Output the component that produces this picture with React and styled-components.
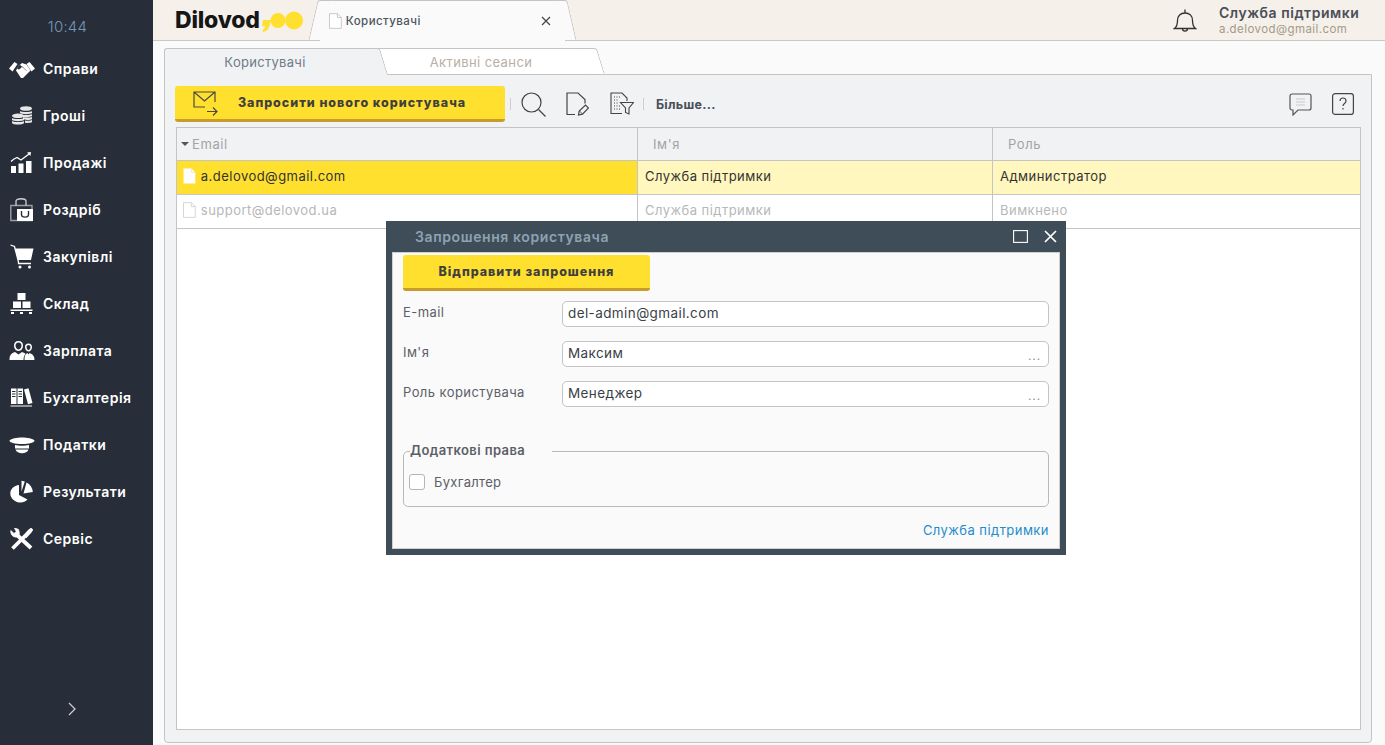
import React from 'react';
import styled, { createGlobalStyle } from 'styled-components';

const Global = createGlobalStyle`
  html, body { margin: 0; padding: 0; height: 100%; overflow: hidden; }
  body { font-family: Inter, "Noto Sans", "Liberation Sans", sans-serif; }
  #root { height: 100%; }
  * { box-sizing: border-box; }
`;

const Page = styled.div`display: flex; width: 1385px; height: 745px; position: relative; background: #fafafa;`;
const Sidebar = styled.nav`width: 153px; flex: none; background: #272e39; display: flex; flex-direction: column; color: #fff;`;
const Clock = styled.div`height: 45px; padding: 16px 18px 0 0; text-align: center; font-size: 15px; line-height: 22px; font-weight: 300; letter-spacing: .2px; color: #7596b5;`;
const MenuItem = styled.a`height: 47px; display: flex; align-items: center; padding-left: 8px; font-size: 14px; font-weight: 600; letter-spacing: .5px; color: #fff;`;
const MenuIcon = styled.span`width: 27px; height: 24px; margin-right: 8px; display: flex; align-items: center; justify-content: center; color: #fff; font-size: 26px;`;
const Expand = styled.div`margin-top: auto; padding: 0 0 28px 68px; height: 44px; display: flex; align-items: center;`;

const Main = styled.div`flex: 1; min-width: 0; display: flex; flex-direction: column;`;
const TopBar = styled.header`height: 41px; flex: none; background: #f5f0ea; border-bottom: 1px solid #c9c9c9; display: flex; align-items: flex-end; padding-left: 22px;`;
const Logo = styled.div`width: 137px; height: 40px; flex: none; display: flex; align-items: center; font-size: 23px; font-weight: 800; letter-spacing: -.2px; color: #161616; position: relative;`;
const LogoMark = styled.svg`margin: 0 0 0 1px; flex: none;`;
const DocTab = styled.div`
  position: relative; width: 245px; height: 41px; margin-bottom: -1px; margin-left: 8px; flex: none; background: #fafafa;
  border-top: 1px solid #c4c4c4; display: flex; align-items: center; padding: 0 14px 0 9px; font-size: 11.5px; font-weight: 500; letter-spacing: .45px; color: #4d5560; border-radius: 3px 3px 0 0;
  &::before, &::after { content: ''; position: absolute; top: -1px; bottom: 1px; width: 14px; background: #fafafa; border-top: 1px solid #c4c4c4; }
  &::before { left: -7px; transform: skewX(-13deg); border-left: 1px solid #c4c4c4; border-radius: 3px 0 0 0; }
  &::after { right: -7px; transform: skewX(13deg); border-right: 1px solid #c4c4c4; border-radius: 0 3px 0 0; }
`;
const DocTabIcon = styled.span`position: relative; z-index: 1; display: flex;`;
const DocTabLabel = styled.span`position: relative; z-index: 1; margin-left: 4px; flex: 1;`;
const DocTabClose = styled.span`position: relative; z-index: 1; display: flex;`;
const UserArea = styled.div`margin-left: auto; height: 40px; display: flex; align-items: center; padding-right: 26px;`;
const Bell = styled.svg`margin-right: 22px; flex: none;`;
const UserText = styled.div`display: flex; flex-direction: column; width: 140px;`;
const UserName = styled.div`font-size: 14px; line-height: 18px; font-weight: 600; color: #4a4f58; white-space: nowrap; letter-spacing: .53px;`;
const UserMail = styled.div`font-size: 11.5px; line-height: 15px; color: #a39a88; white-space: nowrap; letter-spacing: .42px;`;

const Content = styled.div`flex: 1; min-height: 0; display: flex; flex-direction: column; padding: 7px 13px 2px 11px;`;
const Tabs = styled.div`height: 27px; flex: none; display: flex; margin-bottom: -1px; position: relative; z-index: 1;`;
const PanelTab = styled.div`
  position: relative; height: 27px; width: ${p => p.$w}px; flex: none; margin-left: ${p => p.$first ? 0 : -4}px;
  padding-right: ${p => p.$first ? 12 : 5}px;
  display: flex; align-items: center; justify-content: center; font-size: 13px; letter-spacing: ${p => p.$first ? .3 : .4}px;
  color: ${p => p.$active ? '#6f7a8a' : '#bcaea2'};
  background: ${p => p.$active ? '#f1f2f4' : '#fff'};
  border: 1px solid #c4c4c4; border-right: 0; ${p => p.$active ? 'border-bottom: 0;' : 'border-left: 0;'}
  border-radius: ${p => p.$active ? '3px 0 0 0' : '0'};
  z-index: ${p => p.$active ? 2 : 1};
  &::after { content: ''; position: absolute; top: -1px; bottom: ${p => p.$active ? 0 : -1}px; right: -7px; width: 14px;
    background: inherit; border: 1px solid #c4c4c4; border-left: 0; ${p => p.$active ? 'border-bottom: 0;' : ''} transform: skewX(17deg); border-radius: 0 3px 0 0; z-index: -1; }
`;
const Panel = styled.section`flex: 1; min-height: 0; background: #f1f2f4; border: 1px solid #c4c4c4; border-radius: 0 0 4px 4px; display: flex; flex-direction: column; padding: 11px 10px 12px 11px;`;
const Toolbar = styled.div`height: 36px; flex: none; display: flex; align-items: center; margin-bottom: 5px; margin-left: -1px;`;
const YellowButton = styled.button`
  border: 0; border-bottom: 3px solid #c99b2c; border-radius: 3px; background: #ffe02e; color: #3f3f3f; height: 36px; width: ${p => p.$w}px; flex: none;
  font: 800 12.5px Inter, "Noto Sans", sans-serif; letter-spacing: .98px; padding: 0 0 0 ${p => p.$pl || 0}px; display: flex; align-items: center; justify-content: center; position: relative;
`;
const ButtonIcon = styled.svg`position: absolute; left: 18px; top: 4px;`;
const Divider = styled.span`width: 1px; height: 12px; background: #cfcfcf; flex: none; margin: ${p => p.$m};`;
const ToolIcon = styled.svg`flex: none; margin-right: ${p => p.$mr || 0}px;`;
const More = styled.span`font-size: 12.5px; font-weight: 700; color: #4a4f58; letter-spacing: .28px;`;
const ToolSpacer = styled.span`flex: 1;`;

const Table = styled.div`flex: 1; min-height: 0; background: #fff; border: 1px solid #c4c4c4;`;
const Row = styled.div`display: grid; grid-template-columns: 461px 355px 1fr; height: ${p => p.$h}px; border-bottom: 1px solid #c4c4c4;`;
const HeadCell = styled.div`display: flex; align-items: center; background: #f1f2f4; color: #a2a2a8; font-size: 13px; letter-spacing: .6px; padding-left: ${p => p.$pl}px; border-right: ${p => p.$last ? 0 : '1px solid #c4c4c4'}; gap: 3px;`;
const Cell = styled.div`
  display: flex; align-items: center; font-size: 13px; letter-spacing: .47px; padding: 0 0 3px ${p => p.$pl}px; gap: 5px;
  background: ${p => p.$bg || '#fff'}; color: ${p => p.$muted ? '#b7b7b7' : '#333'};
  border-right: ${p => p.$last ? 0 : '1px solid #c4c4c4'};
`;
const SortArrow = styled.span`width: 0; height: 0; border: 4px solid transparent; border-top: 4px solid #555; border-bottom: 0;`;

const Modal = styled.div`position: absolute; left: 386px; top: 221px; width: 680px; height: 334px; background: #3f4d59; padding: 0 6px 6px; display: flex; flex-direction: column; z-index: 5;`;
const ModalBar = styled.div`height: 31px; flex: none; display: flex; align-items: center; padding: 0 0 1px 23px; color: #8ea2b0; font-size: 14px; font-weight: 600; letter-spacing: .6px;`;
const ModalTitle = styled.span`flex: 1;`;
const MaxIcon = styled.svg`margin-right: 16px; margin-top: 1px;`;
const CloseIcon = styled.svg`margin-right: 3px; margin-top: 1px;`;
const ModalBody = styled.div`flex: 1; background: #fafafa; border: 1px solid #cfcfcf; padding: 2px 10px 0; display: flex; flex-direction: column;`;
const FormRow = styled.div`display: flex; height: 26px; margin-bottom: 14px; &:first-of-type { margin-top: 10px; }`;
const FormLabel = styled.label`width: 159px; flex: none; font-size: 13px; line-height: 22px; color: #5b6068; letter-spacing: .42px;`;
const Field = styled.div`flex: 1; height: 26px; background: #fff; border: 1px solid #c4c4c4; border-radius: 5px; display: flex; align-items: center; padding: 0 5px 2px; font-size: 13.5px; letter-spacing: .4px; color: #3a3f47; position: relative;`;
const Dots = styled.span`position: absolute; right: 7px; bottom: 3px; font-size: 12px; line-height: 14px; color: #8f8f8f; letter-spacing: .9px;`;
const Group = styled.fieldset`margin: 21px 0 0; padding: 14px 6px 0; height: 65px; border: 1px solid #b9b9b9; border-radius: 5px; min-width: 0;`;
const GroupLegend = styled.legend`padding: 0 27px 2px 0; margin: -1px 0 0; font-size: 13px; font-weight: 600; color: #5a5f67; line-height: 16px; letter-spacing: .4px;`;
const CheckRow = styled.div`display: flex; align-items: center; gap: 9px; font-size: 13px; color: #5b6068; letter-spacing: .3px; margin-left: -1px;`;
const Check = styled.span`width: 16px; height: 16px; background: #fff; border: 1px solid #b5b5b5; border-radius: 3px; flex: none;`;
const SupportLink = styled.a`margin-top: 14px; text-align: right; font-size: 13px; line-height: 18px; color: #1f8ccc; letter-spacing: .45px;`;

const Page1 = ({ color = '#fff', stroke = 'none', size = 16 }) => (
  <svg width={size * .8} height={size} viewBox="0 0 13 16"><path d="M.5.5h8l4 4v11H.5z" fill={color} stroke={stroke} /><path d="M8.500.5v4h4" fill="none" stroke={stroke === 'none' ? '#e8e8e8' : stroke} /></svg>
);

const icons = {
  hands: <svg width="26" height="18" viewBox="0 0 26 18" fill="#fff"><path d="M0 8.500L5.500 2l3 2L3.500 11.500z" /><path d="M26 8.500L20.500 2l-3 2 5 7.500z" /><path d="M7 10.500l3-5.500 3-2 4.500 1.500 4 6-7.500 7.500h-2z" /><path d="M9.500 3.500L13 2l-3 3.500-1.500 3c1 1 2.500.5 3.500-1l1-1 4.500 4.500" fill="#272e39" stroke="#272e39" strokeWidth=".6" /><path d="M13.500 7.500l5 5-1.500 2-5-4.500z" /></svg>,
  coins: <svg width="22" height="20" viewBox="0 0 22 20" fill="#e6e6e6"><ellipse cx="15" cy="2.500" rx="6" ry="2.300" /><path d="M9 5c1 1.300 11 1.300 12 0v2c-1 1.500-11 1.500-12 0zM9 8c1 1.300 11 1.300 12 0v2c-1 1.500-11 1.500-12 0zM12 11c2 .8 8 .6 9 0v2c-1 1.200-7 1.200-9 .6zM14 14.500c2 .4 6 .4 7-.4v2c-1 1-5 1-7 .6z" /><ellipse cx="7" cy="9.800" rx="6" ry="2.300" /><path d="M1 12c1 1.300 11 1.300 12 0v2c-1 1.500-11 1.500-12 0zM1 15c1 1.300 11 1.300 12 0v2c-1 2-11 2-12 0z" /></svg>,
  chart: <svg width="23" height="23" viewBox="0 0 23 23" fill="#fff"><path d="M1 15h5v7H1zM8.500 12.500h5V22h-5zM16 10h5.500v12H16z" /><path d="M1 10.500C3.500 8 5.500 7 7 6.500l4 2.500 8-6" fill="none" stroke="#fff" strokeWidth="1.300" /><path d="M17 1.500l4-.5-.6 4z" /></svg>,
  bag: <svg width="24" height="24" viewBox="0 0 24 24"><path d="M.8 7.500H22V22.500H.8z" fill="none" stroke="#9a9ea5" strokeWidth="1.400" /><path d="M6 7.500V3c0-3 10-3 10 0v4.500" fill="none" stroke="#cfd1d4" strokeWidth="1.300" /><path d="M7 11h16v12H7z" fill="#fff" /><path d="M11.500 13v3.500c0 3.500 7 3.500 7 0V13" fill="none" stroke="#272e39" strokeWidth="1.400" /></svg>,
  cart: <svg width="24" height="25" viewBox="0 0 24 25"><path d="M5 4.500h18.500L21 16H8z" fill="#fff" /><path d="M.5 1l4 1.500L8.500 18v1.500H21" fill="none" stroke="#fff" strokeWidth="1.300" /><circle cx="10" cy="23" r="1.500" fill="#fff" /><circle cx="19.500" cy="23" r="1.500" fill="#fff" /></svg>,
  stock: <svg width="23" height="23" viewBox="0 0 23 23" fill="#fff"><path d="M7.500 1h8v7h-8zM3 9.500h8V16H3zM12.500 9.500h8V16h-8zM.500 17.500h22v1.500H.500zM1 20h3v2H1zM10 20h3v2h-3zM19 20h3v2h-3z" /></svg>,
  team: <svg width="26" height="21" viewBox="0 0 26 21" fill="#fff"><path d="M9.500 1c3 0 4.500 2 4.500 4.500S12.500 11 9.500 11 5 8 5 5.500 6.500 1 9.500 1zm0 1.500C7.500 2.500 6.500 4 6.500 5.500S7.500 9.500 9.500 9.500s3-2.500 3-4-1-3-3-3z" /><path d="M.5 20c0-5 2-7 5.500-8l3.500 2.500 3.500-2.500c1.500.5 2.500 1 3.500 2-1.500 1.500-2 3.500-2 6z" /><path d="M19.500 3.500c2.300 0 3.500 1.700 3.500 3.500s-1.200 4.500-3.500 4.500S16 9 16 7s1.200-3.500 3.500-3.500zm0 1.500c-1.200 0-2 1-2 2s.8 3 2 3 2-2 2-3-.8-2-2-2z" /><path d="M15.500 20c0-4 .5-6 3-7l1 1.500 1-1.500c3 1 5 3 5 7z" /></svg>,
  books: <svg width="23" height="20" viewBox="0 0 23 20" fill="#fff"><path fillRule="evenodd" d="M1 .5h5.500v15.500H1zM2 3v1h3.500V3zm0 2.500v1h3.500v-1zm0 2.500v1h3.500V8zM7.500.5H13V16H7.500zM8.500 3v1H12V3zm0 2.500v1H12v-1zm0 2.500v1H12V8z" /><path d="M14 1.500l4.500-1.200L22.500 15l-4.500 1.200z" /><path d="M.5 17.500h21.500v1H.5z" /></svg>,
  hat: <svg width="26" height="20" viewBox="0 0 26 20" fill="#fff"><path d="M.5 5.500C4 1.500 22 1.500 25.500 5.500c0 2-5 3.500-12.500 3.500S.5 7.500.5 5.500z" /><path d="M6 10c4 1 10 1 14 0v3.500H6z" /><path d="M6.500 14.500h13c-1.500 5-11.500 5-13 0z" /></svg>,
  pie: <svg width="25" height="23" viewBox="0 0 24 23" fill="#fff"><path d="M9.500 5v10l8.500 4.500C16 21.800 13 22.800 10 22.500 5 22 .8 18 .8 13.500.8 9 4.500 5.500 9.500 5z" /><path d="M12 .8l3.300.8-3.300 10z" /><path d="M17 2.500c3.500 1.800 6 5 6.300 9.500l-9.300 1.500z" /></svg>,
  tools: <svg width="23" height="22" viewBox="0 0 23 22" fill="none" stroke="#fff"><path d="M6 6l15 14" strokeWidth="3.800" /><path d="M.8 2.500c-.3 4 2 7 6.200 6.500 2.500-1 3-4.500 1.200-7.800L4.500.2l1.800 3.300L4 5.500z" fill="#fff" strokeWidth=".8" /><path d="M2.500 20.500L15 8" strokeWidth="3.800" /><path d="M14 8l5-5.500 2-1.500 1 1-1.500 2L15.500 9.500" strokeWidth="2" /></svg>,
};

const menu = [
  ['Справи', 'hands'], ['Гроші', 'coins'], ['Продажі', 'chart'], ['Роздріб', 'bag'], ['Закупівлі', 'cart'], ['Склад', 'stock'],
  ['Зарплата', 'team'], ['Бухгалтерія', 'books'], ['Податки', 'hat'], ['Результати', 'pie'], ['Сервіс', 'tools'],
];

export default function App() {
  return (
    <Page>
      <Global />
      <Sidebar>
        <Clock>10:44</Clock>
        {menu.map(([t, i]) => <MenuItem key={t}><MenuIcon>{icons[i]}</MenuIcon>{t}</MenuItem>)}
        <Expand><svg width="8" height="14" viewBox="0 0 8 14"><path d="M1 1l6 6-6 6" fill="none" stroke="#c9ccd0" strokeWidth="1.300" /></svg></Expand>
      </Sidebar>
      <Main>
        <TopBar>
          <Logo>Dilovod
            <LogoMark width="44" height="24" viewBox="0 0 44 24"><path d="M2 12h8l-1.500 6c-.8 3-2.500 5-6 6l-1.300-1.500c1.700-1 2.700-2.500 2.900-4.500H1z" fill="#ffe02e" /><circle cx="17" cy="12.500" r="7.500" fill="#ffe02e" /><circle cx="33" cy="12.500" r="9" fill="#ffe02e" /></LogoMark>
          </Logo>
          <DocTab>
            <DocTabIcon><Page1 color="#fff" stroke="#c9c9c9" /></DocTabIcon>
            <DocTabLabel>Користувачі</DocTabLabel>
            <DocTabClose><svg width="10" height="10" viewBox="0 0 10 10"><path d="M1 1l8 8M9 1l-8 8" stroke="#444" strokeWidth="1.200" /></svg></DocTabClose>
          </DocTab>
          <UserArea>
            <Bell width="24" height="26" viewBox="0 0 24 26" fill="none" stroke="#333" strokeWidth="1.300"><path d="M1.500 21.500c2.500-2 3-4 3-8 0-4.500 3-7.500 7.500-7.500s7.500 3 7.500 7.500c0 4 .5 6 3 8z" /><path d="M12 6V2.500M9.500 21.500c0 3.500 5 3.500 5 0" /></Bell>
            <UserText>
              <UserName>Служба підтримки</UserName>
              <UserMail>a.delovod@gmail.com</UserMail>
            </UserText>
          </UserArea>
        </TopBar>
        <Content>
          <Tabs>
            <PanelTab $first $active $w={213}>Користувачі</PanelTab>
            <PanelTab $w={221}>Активні сеанси</PanelTab>
          </Tabs>
          <Panel>
            <Toolbar>
              <YellowButton $w={330} $pl={24}>
                <ButtonIcon width="25" height="26" viewBox="0 0 25 26" fill="none" stroke="#4a4a40" strokeWidth="1.200"><path d="M12 17H1V2h21v10M1 2l10.500 9L22 2" /><path d="M14 21.500h10M20 17.500l4 4-4 4" /></ButtonIcon>
                Запросити нового користувача
              </YellowButton>
              <Divider $m="0 10px 0 5px" />
              <ToolIcon $mr={20} width="25" height="25" viewBox="0 0 25 25" fill="none" stroke="#444" strokeWidth="1.200"><circle cx="10.500" cy="10.500" r="9.500" /><path d="M17.500 17.500l7 7" /></ToolIcon>
              <ToolIcon $mr={21} width="23" height="24" viewBox="0 0 23 24" fill="none" stroke="#444" strokeWidth="1.200"><path d="M9 22.500H1V1h11l7 6.500v4" /><path d="M12.500 23l.7-4 6.300-6 3 3-6 6.200z" /><path d="M13.500 19l3 3" strokeWidth=".9" /></ToolIcon>
              <ToolIcon width="24" height="24" viewBox="0 0 24 24" fill="none" stroke="#444" strokeWidth="1.100"><path d="M12 21.500H1V1h11l5 5v3" /><path d="M4 5h7M4 8h5M4 11h5M4 14h6M4 17h6" strokeDasharray="1 1.500" /><path d="M10.500 10.500h13L19 16v6l-3.500-1.500V16z" /></ToolIcon>
              <Divider $m="0 12px 0 9px" />
              <More>Більше...</More>
              <ToolSpacer />
              <ToolIcon $mr={20} width="23" height="23" viewBox="0 0 23 23" fill="none" stroke="#555" strokeWidth="1.200"><path d="M3 1h17a2 2 0 0 1 2 2v12a2 2 0 0 1-2 2H9l-5 5v-5H3a2 2 0 0 1-2-2V3a2 2 0 0 1 2-2z" /><path d="M7 6h9M7 9h9M7 12h9" stroke="#c9c9c9" /></ToolIcon>
              <ToolIcon $mr={7} width="22" height="22" viewBox="0 0 22 22" fill="none" stroke="#444" strokeWidth="1.200"><rect x=".6" y=".6" width="20.800" height="20.800" rx="2.500" /><path d="M8 8c0-4 6-4 6 0 0 2.500-3 2.500-3 5" /><path d="M11 15v1.500" /></ToolIcon>
            </Toolbar>
            <Table>
              <Row $h={33}>
                <HeadCell $pl={4}><SortArrow />Email</HeadCell>
                <HeadCell $pl={15}>Ім'я</HeadCell>
                <HeadCell $pl={15} $last>Роль</HeadCell>
              </Row>
              <Row $h={34}>
                <Cell $pl={6} $bg="#ffe02e"><Page1 />a.delovod@gmail.com</Cell>
                <Cell $pl={7} $bg="#fff7bd">Служба підтримки</Cell>
                <Cell $pl={7} $bg="#fff7bd" $last>Администратор</Cell>
              </Row>
              <Row $h={34}>
                <Cell $pl={6} $muted><Page1 stroke="#d5d5d5" />support@delovod.ua</Cell>
                <Cell $pl={7} $muted>Служба підтримки</Cell>
                <Cell $pl={7} $muted $last>Вимкнено</Cell>
              </Row>
            </Table>
          </Panel>
        </Content>
      </Main>
      <Modal>
        <ModalBar>
          <ModalTitle>Запрошення користувача</ModalTitle>
          <MaxIcon width="15" height="13" viewBox="0 0 15 13"><rect x=".6" y=".6" width="13.800" height="11.800" fill="none" stroke="#fff" strokeWidth="1.100" /></MaxIcon>
          <CloseIcon width="13" height="13" viewBox="0 0 13 13"><path d="M1 1l11 11M12 1L1 12" stroke="#fff" strokeWidth="1.700" /></CloseIcon>
        </ModalBar>
        <ModalBody>
          <YellowButton $w={247}>Відправити запрошення</YellowButton>
          <FormRow><FormLabel>E-mail</FormLabel><Field>del-admin@gmail.com</Field></FormRow>
          <FormRow><FormLabel>Ім'я</FormLabel><Field>Максим<Dots>...</Dots></Field></FormRow>
          <FormRow><FormLabel>Роль користувача</FormLabel><Field>Менеджер<Dots>...</Dots></Field></FormRow>
          <Group>
            <GroupLegend>Додаткові права</GroupLegend>
            <CheckRow><Check />Бухгалтер</CheckRow>
          </Group>
          <SupportLink>Служба підтримки</SupportLink>
        </ModalBody>
      </Modal>
    </Page>
  );
}
